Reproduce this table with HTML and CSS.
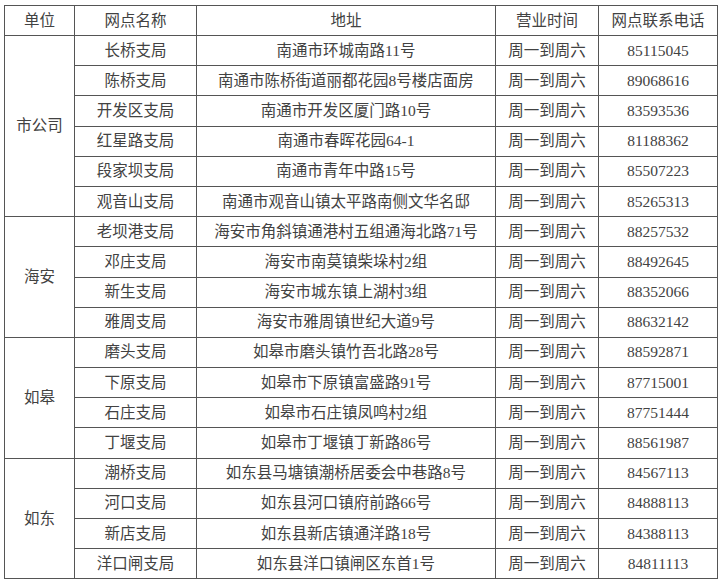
FILE: index.html
```html
<!DOCTYPE html>
<html lang="zh-CN">
<head>
<meta charset="utf-8">
<title>网点联系电话</title>
<link rel="stylesheet" href="styles.css">
</head>
<body>
<table class="outlets">
  <colgroup>
    <col class="c-unit">
    <col class="c-name">
    <col class="c-addr">
    <col class="c-time">
    <col class="c-tel">
  </colgroup>
  <thead>
    <tr><th>单位</th><th>网点名称</th><th>地址</th><th>营业时间</th><th>网点联系电话</th></tr>
  </thead>
  <tbody>
    <tr><td rowspan="6">市公司</td><td>长桥支局</td><td>南通市环城南路11号</td><td>周一到周六</td><td>85115045</td></tr>
    <tr><td>陈桥支局</td><td>南通市陈桥街道丽都花园8号楼店面房</td><td>周一到周六</td><td>89068616</td></tr>
    <tr><td>开发区支局</td><td>南通市开发区厦门路10号</td><td>周一到周六</td><td>83593536</td></tr>
    <tr><td>红星路支局</td><td>南通市春晖花园64-1</td><td>周一到周六</td><td>81188362</td></tr>
    <tr><td>段家坝支局</td><td>南通市青年中路15号</td><td>周一到周六</td><td>85507223</td></tr>
    <tr><td>观音山支局</td><td>南通市观音山镇太平路南侧文华名邸</td><td>周一到周六</td><td>85265313</td></tr>
    <tr><td rowspan="4">海安</td><td>老坝港支局</td><td>海安市角斜镇通港村五组通海北路71号</td><td>周一到周六</td><td>88257532</td></tr>
    <tr><td>邓庄支局</td><td>海安市南莫镇柴垛村2组</td><td>周一到周六</td><td>88492645</td></tr>
    <tr><td>新生支局</td><td>海安市城东镇上湖村3组</td><td>周一到周六</td><td>88352066</td></tr>
    <tr><td>雅周支局</td><td>海安市雅周镇世纪大道9号</td><td>周一到周六</td><td>88632142</td></tr>
    <tr><td rowspan="4">如皋</td><td>磨头支局</td><td>如皋市磨头镇竹吾北路28号</td><td>周一到周六</td><td>88592871</td></tr>
    <tr><td>下原支局</td><td>如皋市下原镇富盛路91号</td><td>周一到周六</td><td>87715001</td></tr>
    <tr><td>石庄支局</td><td>如皋市石庄镇凤鸣村2组</td><td>周一到周六</td><td>87751444</td></tr>
    <tr><td>丁堰支局</td><td>如皋市丁堰镇丁新路86号</td><td>周一到周六</td><td>88561987</td></tr>
    <tr><td rowspan="4">如东</td><td>潮桥支局</td><td>如东县马塘镇潮桥居委会中巷路8号</td><td>周一到周六</td><td>84567113</td></tr>
    <tr><td>河口支局</td><td>如东县河口镇府前路66号</td><td>周一到周六</td><td>84888113</td></tr>
    <tr><td>新店支局</td><td>如东县新店镇通洋路18号</td><td>周一到周六</td><td>84388113</td></tr>
    <tr><td>洋口闸支局</td><td>如东县洋口镇闸区东首1号</td><td>周一到周六</td><td>84811113</td></tr>
  </tbody>
</table>
</body>
</html>
```
FILE: styles.css
```css
html, body {
  margin: 0;
  background: #ffffff;
}
body {
  padding: 5px 0 0 4px;
  font-family: "Liberation Serif", "Noto Sans CJK SC", serif;
  font-size: 15.5px;
  color: #424242;
}
.outlets {
  border-collapse: collapse;
  table-layout: fixed;
  width: 713px;
}
.c-unit { width: 70px; }
.c-name { width: 122px; }
.c-addr { width: 299px; }
.c-time { width: 103px; }
.c-tel { width: 119px; }
.outlets th,
.outlets td {
  border: 1px solid #555555;
  height: 29px;
  padding: 0;
  text-align: center;
  vertical-align: middle;
  font-weight: normal;
  white-space: nowrap;
  line-height: 20px;
}
.outlets tbody td {
  height: 29.2px;
}
```
